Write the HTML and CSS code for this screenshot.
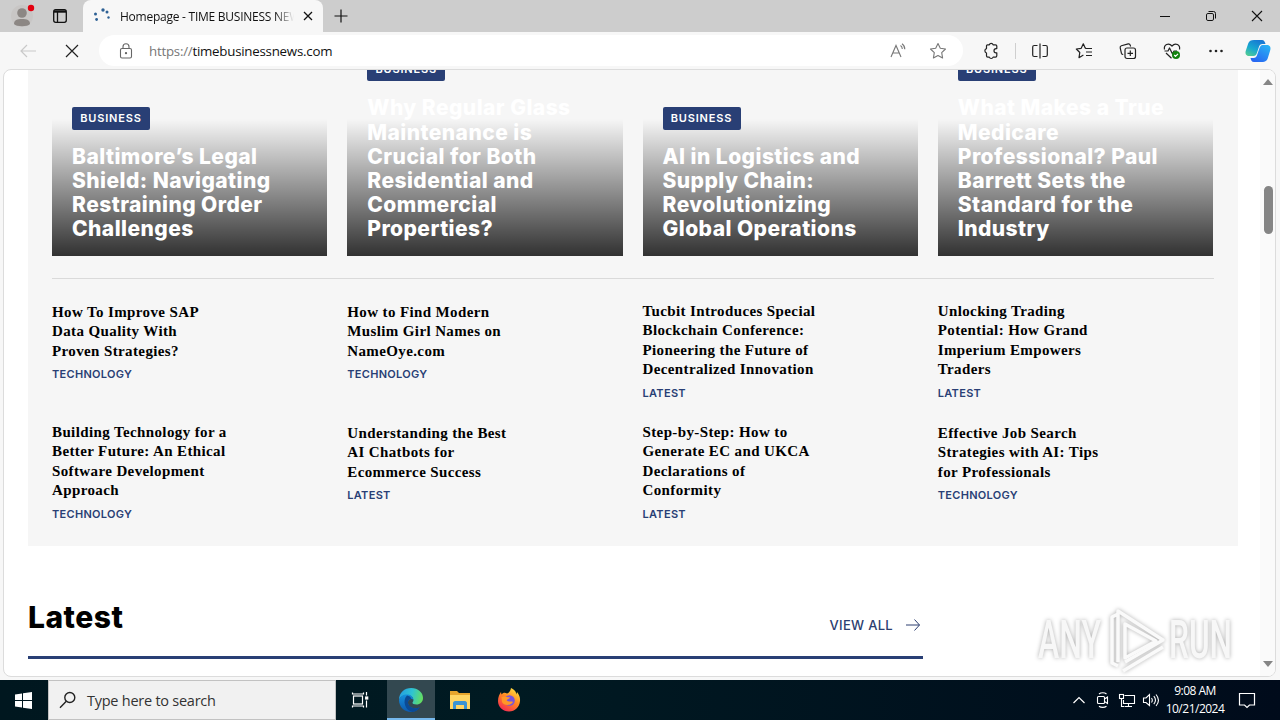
FILE: index.html
```html
<!DOCTYPE html>
<html lang="en">

<head>
    <meta charset="UTF-8">
    <title>Homepage - TIME BUSINESS NEWS</title>
    <link rel="stylesheet" href="styles.css">
</head>

<body>
    <div class="browser">
        <div class="titlebar">
            <svg class="profile" width="28" height="26" viewBox="0 0 28 26">
                <circle cx="14" cy="13" r="11" fill="#c8c6c5" />
                <circle cx="14" cy="10" r="4.8" fill="#8c8784" />
                <path d="M6 21c0-4 3-5 8-5s8 1 8 5c-2 3-14 3-16 0z" fill="#8c8784" />
                <circle cx="23" cy="5" r="3.2" fill="#e3000f" />
            </svg>
            <svg class="tab-menu" width="16" height="16" viewBox="0 0 16 16" fill="none" stroke="#111" stroke-width="1.3">
                <rect x="1.7" y="1.7" width="12.6" height="12.6" rx="2" />
                <path d="M2 3.500h12" stroke-width="2.400" /><path d="M5.500 4v10" />
            </svg>
            <div class="tab">
                <svg width="18" height="16" viewBox="0 0 18 16" fill="#2d6094">
                    <circle cx="2.5" cy="6" r="1.5" /><circle cx="3.6" cy="11.5" r="1.4" />
                    <circle cx="10" cy="2" r="1.7" /><circle cx="14" cy="4" r="1.5" />
                    <circle cx="15.5" cy="9.5" r="1.2" />
                </svg>
                <span class="tab-title">Homepage - TIME BUSINESS NEWS</span>
                <svg width="10" height="10" viewBox="0 0 10 10" stroke="#111" stroke-width="1.3"><path d="M1 1l8 8M9 1l-8 8" /></svg>
            </div>
            <svg class="new-tab" width="14" height="14" viewBox="0 0 14 14" stroke="#111" stroke-width="1.2"><path d="M7 .5v13M.5 7h13" /></svg>
            <div class="window-buttons">
                <svg width="12" height="12" viewBox="0 0 12 12" stroke="#111"><path d="M1 6.5h10" /></svg>
                <svg width="12" height="12" viewBox="0 0 12 12" fill="none" stroke="#111"><rect x="1.5" y="3.5" width="7" height="7" rx="1.4" /><path d="M3.5 1.5h5a2 2 0 0 1 2 2v5" /></svg>
                <svg width="12" height="12" viewBox="0 0 12 12" stroke="#111" stroke-width="1.1"><path d="M1 1l10 10M11 1L1 11" /></svg>
            </div>
        </div>

        <div class="toolbar">
            <svg class="back" width="18" height="16" viewBox="0 0 18 16" fill="none" stroke="#c9c9c9" stroke-width="1.2"><path d="M17 8H2M8 2L2 8l6 6" /></svg>
            <svg class="stop" width="14" height="14" viewBox="0 0 14 14" stroke="#222" stroke-width="1.2"><path d="M1 1l12 12M13 1L1 13" /></svg>
            <div class="address">
                <svg width="14" height="16" viewBox="0 0 14 16" fill="none" stroke="#666" stroke-width="1.1">
                    <rect x="1.5" y="5.5" width="11" height="9.5" rx="1.5" /><path d="M4 5.5V3.8a3 3 0 0 1 6 0v1.7" /><circle cx="7" cy="10.2" r=".6" fill="#666" />
                </svg>
                <span class="url"><span>https://</span>timebusinessnews.com</span>
                <svg class="read" width="17" height="16" viewBox="0 0 17 16" fill="none" stroke="#777" stroke-width="1.1">
                    <path d="M1 14L6 2.500l5 11.500M2.800 10h6.400M10.500 2.500c1.200.8 1.800 2 1.800 3.500M12 .8c1.800 1.200 2.800 3 2.800 5.500" />
                </svg>
                <svg width="18" height="18" viewBox="0 0 18 18" fill="none" stroke="#777" stroke-width="1.100" stroke-linejoin="round"><path d="M9 1.500l2.300 4.800 5.200.7-3.800 3.700.9 5.300L9 13.500 4.400 16l.9-5.300L1.500 7l5.200-.7z" /></svg>
            </div>
            <div class="tools">
                <svg width="18" height="18" viewBox="0 0 18 18" fill="none" stroke="#222" stroke-width="1.200" stroke-linejoin="round"><path d="M4.500 3.800c0-.7.400-1 1-1h1.800a2 2 0 0 1 3.800 0h2.400c.8 0 1.300.5 1.300 1.300v2.500h-.7a2.100 2.100 0 0 0 0 4.200h.7v3c0 .8-.5 1.300-1.300 1.300h-2.400a2 2 0 0 1-3.800 0H5.800c-.8 0-1.300-.5-1.300-1.300V11a2.300 2.300 0 0 1 0-4.400z" /></svg>
                <i class="divider"></i>
                <svg width="18" height="18" viewBox="0 0 18 18" fill="none" stroke="#222" stroke-width="1.2"><path d="M6.500 3.500H3.200A1.500 1.500 0 0 0 1.700 5v8a1.500 1.500 0 0 0 1.500 1.500h3.300M11.500 3.500h3.300A1.500 1.500 0 0 1 16.300 5v8a1.500 1.500 0 0 1-1.500 1.500h-3.300M9 1.500v15" /></svg>
                <svg width="18" height="18" viewBox="0 0 18 18" fill="none" stroke="#222" stroke-width="1.200" stroke-linejoin="round"><path d="M11 6.200l-.8-.1L8.300 1.800 6.200 6.300l-4.900.7 3.500 3.500-.8 5.200L8.400 13M10.500 6.500H17M11 10h6M11 13.500h6" /></svg>
                <svg width="18" height="18" viewBox="0 0 18 18" fill="none" stroke="#222" stroke-width="1.200"><rect x="6" y="6" width="10.500" height="10.500" rx="2" /><path d="M11.300 8.500v5.500M8.500 11.300H14M4.200 12.500c-1 0-1.500-.4-1.800-1.300L1.200 5.800c-.2-1 .2-1.700 1.200-2l6.800-1.900c1-.2 1.700.2 2 1.200l.4 1.400" /></svg>
                <svg width="18" height="18" viewBox="0 0 18 18" fill="none" stroke="#222" stroke-width="1.200" stroke-linejoin="round"><path d="M1.500 7.500C.5 3 5.500 0 9 4c3.500-4 8.500-1 7.500 3.500M1.500 9H5l1.500-3 3 6L11 9h3M3 11l5.500 5.200" /><circle cx="13" cy="13" r="4" fill="#13830f" stroke="none" /><path d="M11.200 13l1.300 1.300 2.500-2.500" stroke="#fff" /></svg>
                <svg width="18" height="18" viewBox="0 0 18 18" fill="#222"><circle cx="3.500" cy="9" r="1.300" /><circle cx="9" cy="9" r="1.300" /><circle cx="14.500" cy="9" r="1.300" /></svg>
            </div>
            <svg class="copilot" width="26" height="24" viewBox="0 0 26 24">
                <defs>
                    <linearGradient id="cop1" x1="0" y1="1" x2=".6" y2="0"><stop offset="0" stop-color="#5bd18a" /><stop offset=".5" stop-color="#18a8d0" /><stop offset="1" stop-color="#1779d3" /></linearGradient>
                    <linearGradient id="cop2" x1=".3" y1="1" x2="1" y2="0"><stop offset="0" stop-color="#2767f2" /><stop offset="1" stop-color="#27b8f4" /></linearGradient>
                </defs>
                <path d="M9 1h8c2 0 3 2 3.500 4h-3c-2 0-3 1-3.600 3l-2 6c-.6 1.700-1.500 3-3.500 3H4c-3 0-4-2.500-3.300-5L3.200 4.500C4 2 6 1 9 1z" fill="url(#cop1)" />
                <path d="M17 23H9c-2.500 0-3-2-3.500-4h3c2 0 3-1 3.600-3l2.400-7c.5-1.500 1.500-3 3-3h4.500c3 0 4 2.500 3.300 5l-2.300 7.500C22 22 20 23 17 23z" fill="url(#cop2)" />
            </svg>
        </div>

        <div class="viewport">
            <div class="page">
                <div class="panel">
                    <div class="cards">
                        <div class="card">
                            <span class="tag">BUSINESS</span>
                            <h2>Baltimore’s Legal<br>Shield: Navigating<br>Restraining Order<br>Challenges</h2>
                        </div>
                        <div class="card">
                            <span class="tag">BUSINESS</span>
                            <h2>Why Regular Glass<br>Maintenance is<br>Crucial for Both<br>Residential and<br>Commercial<br>Properties?</h2>
                        </div>
                        <div class="card">
                            <span class="tag">BUSINESS</span>
                            <h2>AI in Logistics and<br>Supply Chain:<br>Revolutionizing<br>Global Operations</h2>
                        </div>
                        <div class="card">
                            <span class="tag">BUSINESS</span>
                            <h2>What Makes a True<br>Medicare<br>Professional? Paul<br>Barrett Sets the<br>Standard for the<br>Industry</h2>
                        </div>
                    </div>
                    <div class="articles">
                        <div class="article short">
                            <h3>How To Improve SAP<br>Data Quality With<br>Proven Strategies?</h3>
                            <span class="category">TECHNOLOGY</span>
                        </div>
                        <div class="article short">
                            <h3>How to Find Modern<br>Muslim Girl Names on<br>NameOye.com</h3>
                            <span class="category">TECHNOLOGY</span>
                        </div>
                        <div class="article">
                            <h3>Tucbit Introduces Special<br>Blockchain Conference:<br>Pioneering the Future of<br>Decentralized Innovation</h3>
                            <span class="category">LATEST</span>
                        </div>
                        <div class="article">
                            <h3>Unlocking Trading<br>Potential: How Grand<br>Imperium Empowers<br>Traders</h3>
                            <span class="category">LATEST</span>
                        </div>
                        <div class="article">
                            <h3>Building Technology for a<br>Better Future: An Ethical<br>Software Development<br>Approach</h3>
                            <span class="category">TECHNOLOGY</span>
                        </div>
                        <div class="article short">
                            <h3>Understanding the Best<br>AI Chatbots for<br>Ecommerce Success</h3>
                            <span class="category">LATEST</span>
                        </div>
                        <div class="article">
                            <h3>Step-by-Step: How to<br>Generate EC and UKCA<br>Declarations of<br>Conformity</h3>
                            <span class="category">LATEST</span>
                        </div>
                        <div class="article short">
                            <h3>Effective Job Search<br>Strategies with AI: Tips<br>for Professionals</h3>
                            <span class="category">TECHNOLOGY</span>
                        </div>
                    </div>
                </div>
                <div class="section-head">
                    <h1>Latest</h1>
                    <span class="view-all">VIEW ALL
                        <svg width="16" height="14" viewBox="0 0 16 14" fill="none" stroke="#2c3e70"><path d="M1 7h13.500M9.500 1.500L14.500 7l-5 5.500" /></svg>
                    </span>
                </div>
            </div>
            <div class="scrollbar">
                <svg width="10" height="6" viewBox="0 0 10 6" fill="#858585"><path d="M5 0l5 6H0z" /></svg>
                <i class="thumb"></i>
                <svg width="10" height="6" viewBox="0 0 10 6" fill="#858585"><path d="M0 0h10L5 6z" /></svg>
            </div>
            <svg class="watermark" width="208" height="72" viewBox="0 0 208 72">
                <text x="7" y="54" textLength="63" lengthAdjust="spacingAndGlyphs">ANY</text>
                <g fill="none" stroke="#fafafa" stroke-width="3.500" stroke-linejoin="round">
                    <path d="M87 10l-6 3v46l6 3M87 58V7l45 29-38 22" />
                    <path d="M94 20v34l31-17zM92 67l40-24" />
                </g>
                <text x="138" y="54" textLength="63" lengthAdjust="spacingAndGlyphs">RUN</text>
            </svg>
        </div>
    </div>

    <div class="taskbar">
        <div class="start">
            <svg width="17" height="17" viewBox="0 0 17 17" fill="#fff"><path d="M0 2.400L7 1.400V8H0zM8 1.300L17 0v8H8zM0 9h7v6.600l-7-1zM8 9h9v8l-9-1.300z" /></svg>
        </div>
        <div class="search">
            <svg width="18" height="18" viewBox="0 0 18 18" fill="none" stroke="#222" stroke-width="1.400"><circle cx="10.800" cy="6.500" r="5" /><path d="M7.300 10.200L1 16.700" /></svg>
            Type here to search
        </div>
        <div class="app task-view">
            <svg width="18" height="18" viewBox="0 0 18 18" fill="none" stroke="#fff" stroke-width="1.200"><rect x="2.500" y="5" width="9" height="8" /><path d="M1.500 1.500v1.500h11V1.500M1.500 16.500V15h11v1.500M15.500 1v3.500M15.500 9.500v7" /><rect x="14.700" y="6" width="2" height="2" fill="#fff" /></svg>
        </div>
        <div class="app active">
            <svg width="26" height="26" viewBox="0 0 26 26">
                <defs>
                    <linearGradient id="edge1" x1="0" y1=".4" x2="1" y2=".6"><stop offset="0" stop-color="#249fe2" /><stop offset=".5" stop-color="#2fc3d2" /><stop offset="1" stop-color="#66df5c" /></linearGradient>
                    <linearGradient id="edge2" x1="0" y1="0" x2="0" y2="1"><stop offset="0" stop-color="#158fdc" /><stop offset="1" stop-color="#0d59ad" /></linearGradient>
                </defs>
                <path d="M1 13C1 5.500 6.500 1 13.200 1 20 1 25 5.500 25 11c0 4-3 6.500-6.500 6.500-2.500 0-4.500-1-4-2 .8-1 .9-1.600.9-2.500 0-3-3-5-6.400-5-4 0-7 2-8 5z" fill="url(#edge1)" />
                <path d="M1 13c1-3.500 4-5.500 8-5.500 3.300 0 6.400 2 6.400 5.500-1-1.500-5-1.500-5.400 2-.4 4.500 5 8 11.500 5.500C19 24 16 25 13 25 6 25 1 19.500 1 13z" fill="url(#edge2)" />
                <path d="M9 8.500c-5 5-2 15 5.500 16.400 3-.3 5.800-2 7.500-4.700-6.500 2.800-12.400-.8-12-5.200.2-2 2-3 3.500-3-.5-2-2.500-3.200-4.500-3.500z" fill="#0b4a94" />
            </svg>
        </div>
        <div class="app">
            <svg width="22" height="20" viewBox="0 0 22 20">
                <path d="M1 1h7l2 2h11v4H1z" fill="#e7a52c" /><path d="M1 5h20v14H1z" fill="#ffd563" />
                <path d="M4 19v-6c0-1 1-2 2-2h10c1 0 2 1 2 2v6h-3v-4H7v4z" fill="#3a94d3" />
            </svg>
        </div>
        <div class="app">
            <svg width="24" height="24" viewBox="0 0 24 24">
                <defs><linearGradient id="fox" x1=".8" y1="0" x2=".2" y2="1"><stop offset="0" stop-color="#ffe342" /><stop offset=".45" stop-color="#ff8a22" /><stop offset="1" stop-color="#f52455" /></linearGradient></defs>
                <path d="M14 0c4 2 5 4 5.500 6.500L20 4c2.500 3 3.300 6 3 9-.5 6-5 10.500-11 10.500S1 19 1 13c0-4 1.500-7 3-9l.5 2.500C6 4.500 8 4 10 5.500c1.500-.5 3.500-2 4-5.500z" fill="url(#fox)" />
                <circle cx="12.500" cy="12.500" r="5.300" fill="#7654dc" />
                <path d="M4.500 9c3-1.500 5 .2 8.500.3-.5 2-3 1.700-3.300 3.200 2 2 4.800.3 6.300 1.500-2 4-9.500 4-11 0z" fill="#ff9727" />
            </svg>
        </div>
        <div class="tray">
            <svg width="14" height="18" viewBox="0 0 14 18" fill="none" stroke="#fff" stroke-width="1.200"><path d="M1.500 12L7 6.500l5.500 5.500" /></svg>
            <svg width="14" height="18" viewBox="0 0 14 18" fill="none" stroke="#fff" stroke-width="1.100"><rect x="2.500" y="5.500" width="7" height="7" rx="1" /><path d="M9.500 8l3-2v6.500l-3-2M4 3c2-1.700 5.500-1.700 7.500 0M4 15.200c2 1.600 5.500 1.600 7.500 0" /></svg>
            <svg width="18" height="18" viewBox="0 0 18 18" fill="none" stroke="#fff" stroke-width="1.100"><path d="M6.500 4.500h10v8H5.500V9M10.500 12.500v3M7 15.500h7M3.500 8v7.500h3" /><rect x="1.500" y="3.500" width="4" height="4" /></svg>
            <svg width="18" height="18" viewBox="0 0 18 18" fill="none" stroke="#fff" stroke-width="1.100"><path d="M1.500 7v4.500h2.500l3.500 3v-11L4 7zM9.500 7c1 1.300 1 3 0 4.500M11.800 5.200c2 2.400 2 5.600 0 8M14 3.500c3 3.500 3 8 0 11.500" /></svg>
        </div>
        <div class="clock">9:08 AM<br>10/21/2024</div>
        <svg class="notice" width="18" height="18" viewBox="0 0 18 18" fill="none" stroke="#fff" stroke-width="1.200"><path d="M1.500 2.500h15v11.500h-5L9 16.500 6.500 14h-5z" /></svg>
    </div>
</body>

</html>
```
FILE: styles.css
```css
* {
    box-sizing: border-box;
}

body {
    margin: 0;
    width: 1280px;
    height: 720px;
    overflow: hidden;
    font-family: "Open Sans", "Noto Sans", sans-serif;
    display: flex;
    flex-direction: column;
}

svg {
    display: block;
    flex-shrink: 0;
}

h1,
h2,
h3 {
    margin: 0;
    white-space: nowrap;
}

.browser {
    height: 680px;
    background: #f7f7f7;
    display: flex;
    flex-direction: column;
}

.titlebar {
    height: 32px;
    background: #cdcdcd;
    display: flex;
    align-items: center;
    padding-left: 8px;
}

.tab-menu {
    margin-left: 16px;
}

.tab {
    width: 240px;
    height: 32px;
    margin-left: 15px;
    padding: 0 10px;
    background: #f7f7f7;
    border-radius: 8px 8px 0 0;
    display: flex;
    align-items: center;
}

.tab-title {
    width: 174px;
    margin: 0 9px;
    overflow: hidden;
    white-space: nowrap;
    font-size: 12px;
    letter-spacing: -0.25px;
    color: #111;
    -webkit-mask-image: linear-gradient(90deg, #000 155px, transparent);
    mask-image: linear-gradient(90deg, #000 155px, transparent);
}

.new-tab {
    margin-left: 11px;
}

.window-buttons {
    margin-left: auto;
    padding-right: 17px;
    display: flex;
    gap: 34px;
}

.toolbar {
    height: 37px;
    display: flex;
    align-items: center;
    padding: 0 9px 0 19px;
}

.stop {
    margin-left: 28px;
}

.address {
    width: 864px;
    height: 31px;
    margin-left: 20px;
    padding: 0 16px 0 20px;
    background: #fff;
    border-radius: 16px;
    display: flex;
    align-items: center;
}

.url {
    margin-left: 16px;
    font-size: 13.3px;
    letter-spacing: -0.24px;
    color: #111;
}

.url span {
    color: #777;
}

.read {
    margin-left: auto;
    margin-right: 22px;
}

.tools {
    margin-left: 19px;
    display: flex;
    align-items: center;
    gap: 26px;
}

.divider {
    width: 1px;
    height: 16px;
    margin: 0 -11px;
    background: #cfcfcf;
}

.copilot {
    margin-left: auto;
}

.viewport {
    position: relative;
    width: 1273px;
    height: 608px;
    margin: 0 3px;
    border: 1px solid #dcdcdc;
    border-radius: 8px;
    background: #fff;
    overflow: hidden;
    display: flex;
    justify-content: space-between;
}

.page {
    width: 1210px;
    margin-left: 24px;
}

.panel {
    height: 476px;
    padding: 0 24px;
    background: #f6f6f6;
}

.cards {
    height: 209px;
    padding-bottom: 22px;
    border-bottom: 1px solid #dadada;
    display: grid;
    grid-template-columns: repeat(4, 275.25px);
    grid-template-rows: 186px;
    gap: 20px;
}

.card {
    height: 186px;
    padding: 0 20px 15px;
    background: linear-gradient(transparent 49px, rgba(0, 0, 0, 0.8)) no-repeat;
    display: flex;
    flex-direction: column;
    justify-content: flex-end;
    align-items: flex-start;
    gap: 15px;
}

.tag {
    flex-shrink: 0;
    width: 78px;
    height: 23px;
    background: #293f75;
    border-radius: 2px;
    color: #fff;
    font: 600 11px/23px Inter, sans-serif;
    letter-spacing: 0.85px;
    text-align: center;
}

.card h2 {
    color: #fff;
    font: 800 21px/24.1px Inter, sans-serif;
    letter-spacing: 0.45px;
}

.articles {
    padding-top: 23px;
    display: grid;
    grid-template-columns: repeat(4, 275.25px);
    grid-template-rows: 121px 121px;
    column-gap: 20px;
}

.article.short {
    padding-top: 1px;
}

.article h3 {
    color: #000;
    font: 700 15px/19.4px "Liberation Serif", serif;
    letter-spacing: 0.38px;
}

.category {
    display: block;
    margin-top: 4px;
    color: #293f75;
    font: 600 11px/18px Inter, sans-serif;
    letter-spacing: 0.3px;
}

.section-head {
    width: 895px;
    height: 113px;
    padding-top: 51px;
    border-bottom: 3px solid #293f75;
    display: flex;
    justify-content: space-between;
}

.section-head h1 {
    font: 800 30px/40px Inter, sans-serif;
    letter-spacing: 0.5px;
}

.view-all {
    height: 20px;
    margin-top: 18px;
    padding-right: 2px;
    color: #2c3e70;
    font: 500 13px/20px Inter, sans-serif;
    letter-spacing: 0.3px;
    display: flex;
    align-items: center;
    gap: 12px;
}

.scrollbar {
    width: 15px;
    height: 606px;
    padding: 9px 0 9px 1px;
    background: #fafafa;
    display: flex;
    flex-direction: column;
    align-items: center;
}

.scrollbar svg:last-child {
    margin-top: auto;
}

.thumb {
    width: 9px;
    height: 48px;
    margin-top: 101px;
    border-radius: 5px;
    background: #858585;
}

.watermark {
    position: absolute;
    left: 1027px;
    top: 534px;
    filter: drop-shadow(0 0 2px rgba(0, 0, 0, 0.32));
}

.watermark text {
    font: 500 53px Roboto, sans-serif;
    fill: #f7f7f7;
}

.taskbar {
    height: 40px;
    background: linear-gradient(90deg, #00171f, #001a22 40%, #000b1b);
    color: #fff;
    display: flex;
    align-items: center;
}

.start {
    width: 48px;
    padding-left: 15px;
}

.search {
    width: 288px;
    height: 40px;
    padding-left: 10px;
    background: #f1f1f1;
    border: 1px solid #c2c2c2;
    color: #333;
    font-size: 14.5px;
    letter-spacing: -0.25px;
    display: flex;
    align-items: center;
    gap: 10px;
}

.app {
    width: 49px;
    height: 40px;
    display: flex;
    align-items: center;
    justify-content: center;
}

.app.task-view {
    width: 51px;
    padding-right: 3px;
}

.app.active {
    width: 48px;
    background: #334850;
    border-bottom: 2px solid #76b9ed;
    padding-top: 2px;
}

.tray {
    margin-left: auto;
    display: flex;
    gap: 9px;
}

.tray svg:last-child {
    margin-left: -3px;
}

.clock {
    width: 70px;
    margin-right: 3px;
    font-size: 12px;
    line-height: 18px;
    letter-spacing: -0.5px;
    text-align: center;
}

.notice {
    margin: 0 24px 0 5px;
}
```
